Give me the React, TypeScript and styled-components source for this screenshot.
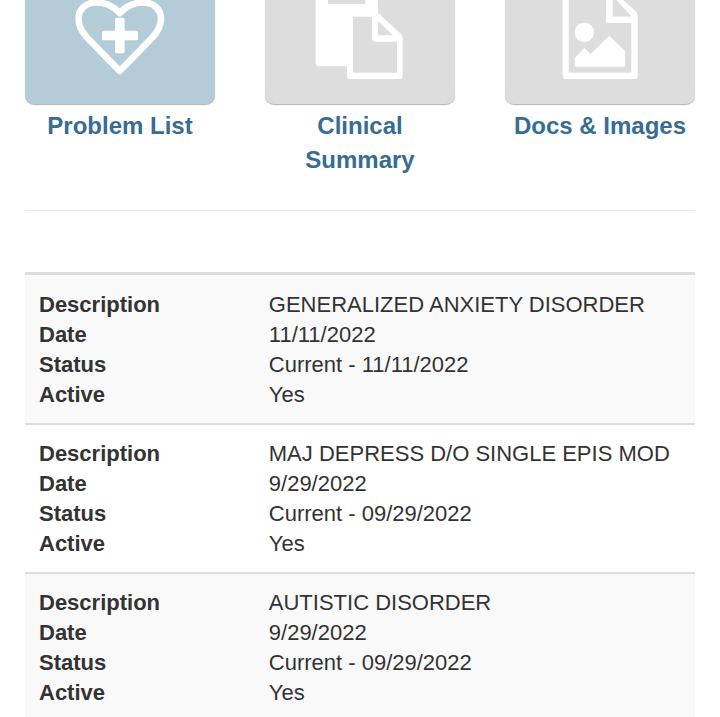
import React from "react";
import styled, { createGlobalStyle } from "styled-components";

const GlobalStyle = createGlobalStyle`
  *, *::before, *::after { box-sizing: border-box; }
  body {
    margin: 0;
    background: #fff;
    color: #333;
    font-family: "Liberation Sans", Arial, Helvetica, sans-serif;
    overflow-x: hidden;
  }
`;

const Page = styled.main`
  padding: 0 25px;
`;

const TileNav = styled.nav`
  display: grid;
  grid-template-columns: repeat(3, minmax(0, 1fr));
  gap: 50px;
  padding-bottom: 33px;
  border-bottom: 1px solid #e8e8e8;
`;

const TileLink = styled.a`
  display: block;
  color: #376c95;
  font-size: 24px;
  font-weight: bold;
  line-height: 34px;
  text-align: center;
  text-decoration: none;
`;

const TileFace = styled.span<{ $selected?: boolean }>`
  display: flex;
  justify-content: center;
  margin-bottom: 5px;
  border-radius: 0 0 9px 9px;
  background: ${(p) => (p.$selected ? "#b4ccd7" : "#ddd")};
  box-shadow: 0 1px 1px #b4b4b4;
`;

const TileArt = styled.svg`
  display: block;
  width: 190px;
  height: 104px;
  flex: none;
`;

const TileLabel = styled.span`
  display: block;
`;

const Records = styled.table`
  width: 100%;
  margin-top: 61px;
  border-collapse: separate;
  border-spacing: 0;
  table-layout: fixed;
  font-size: 22px;
  line-height: 30px;
`;

const Field = styled.th`
  width: 34%;
  padding: 0 0 0 14px;
  font-weight: bold;
  text-align: left;
  vertical-align: top;
`;

const Value = styled.td`
  padding: 0 0 0 16px;
  font-weight: normal;
  vertical-align: top;
`;

const RecordGroup = styled.tbody`
  &:nth-of-type(odd) {
    background: #f9f9f9;
  }
  tr:first-child > * {
    padding-top: 14px;
    border-top: 2px solid #ddd;
  }
  &:first-of-type tr:first-child > * {
    padding-top: 15px;
    border-top-width: 3px;
  }
  tr:last-child > * {
    padding-bottom: 13px;
  }
`;

const HeartArt = () => (
  <TileArt viewBox="0 0 190 104" aria-hidden="true">
    <path
      d="M94.7 71 L62 37.5 C56 31 53.5 25 53.5 18.5 C53.5 9 61 2.5 71 2.5 C81 2.5 88 6 94.7 13 C101.4 6 108.4 2.5 118.4 2.5 C128.4 2.5 136 9 136 18.5 C136 25 133.4 31 127.4 37.5 Z"
      fill="none"
      stroke="#fff"
      strokeWidth="6.6"
      strokeLinejoin="round"
    />
    <rect x="77" y="30.7" width="36" height="9.6" rx="1.5" fill="#fff" />
    <rect x="90" y="17.7" width="9.6" height="35.6" rx="1.5" fill="#fff" />
  </TileArt>
);

const ClipboardArt = () => (
  <TileArt viewBox="0 0 190 104" aria-hidden="true">
    <path
      fill="#fff"
      fillRule="evenodd"
      d="M50.7 -2 H113 V12.7 L136 34 Q137.7 36 137.7 39 V76 Q137.7 79 134.7 79 H85 Q82 79 82 76 V66.3 H53.7 Q50.7 66.3 50.7 63.3 Z M63 -3 V4 H100.3 V-3 Z M88 16.7 V72.7 H132 V41.7 H110 Q107 41.7 107 38.7 V16.7 Z M113 21 V35.2 H127.7 Z"
    />
  </TileArt>
);

const ImageFileArt = () => (
  <TileArt viewBox="0 0 190 104" aria-hidden="true">
    <path
      fill="#fff"
      fillRule="evenodd"
      d="M57.7 -3 H115 L131 11.5 Q132.7 13.5 132.7 16 V76 Q132.7 79 129.7 79 H60.7 Q57.7 79 57.7 76 Z M63.7 -4 V72.7 H126.3 V23 H104 Q101 23 101 20 V-4 Z M107.7 -4 V16.5 H126.7 L108.5 -3 Z"
    />
    <circle cx="79.3" cy="32.3" r="9.7" fill="#fff" />
    <path fill="#fff" d="M69.7 58 L79.3 48 L85.7 54 L104.3 35.7 L120 51 V66.7 H69.7 Z" />
  </TileArt>
);

const tiles = [
  { label: "Problem List", href: "#problem-list", Art: HeartArt, selected: true },
  { label: "Clinical Summary", href: "#clinical-summary", Art: ClipboardArt, selected: false },
  { label: "Docs & Images", href: "#docs-images", Art: ImageFileArt, selected: false },
];

const problems = [
  { Description: "GENERALIZED ANXIETY DISORDER", Date: "11/11/2022", Status: "Current - 11/11/2022", Active: "Yes" },
  { Description: "MAJ DEPRESS D/O SINGLE EPIS MOD", Date: "9/29/2022", Status: "Current - 09/29/2022", Active: "Yes" },
  { Description: "AUTISTIC DISORDER", Date: "9/29/2022", Status: "Current - 09/29/2022", Active: "Yes" },
];

export default function App() {
  return (
    <>
      <GlobalStyle />
      <Page>
        <TileNav>
          {tiles.map(({ label, href, Art, selected }) => (
            <TileLink key={label} href={href} aria-current={selected ? "page" : undefined}>
              <TileFace $selected={selected}>
                <Art />
              </TileFace>
              <TileLabel>{label}</TileLabel>
            </TileLink>
          ))}
        </TileNav>
        <Records>
          {problems.map((problem) => (
            <RecordGroup key={problem.Description}>
              {Object.entries(problem).map(([field, value]) => (
                <tr key={field}>
                  <Field scope="row">{field}</Field>
                  <Value>{value}</Value>
                </tr>
              ))}
            </RecordGroup>
          ))}
        </Records>
      </Page>
    </>
  );
}
